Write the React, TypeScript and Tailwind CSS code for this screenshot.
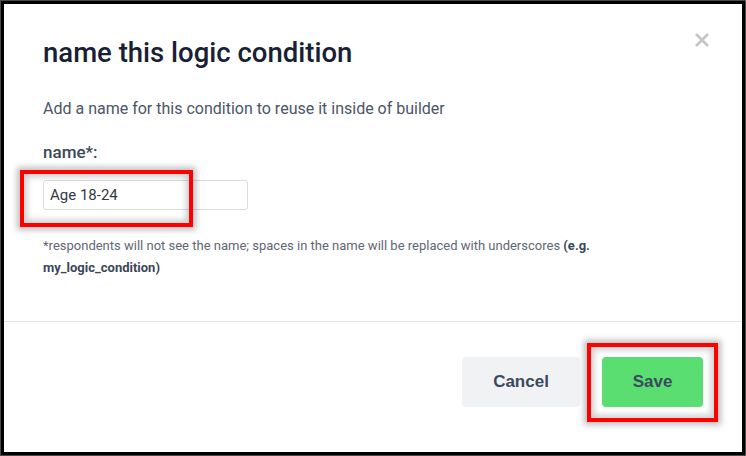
export default function App() {
  return (
    <div className="h-[456px] w-[746px] bg-[#4a4a4a] p-px">
      <div className="relative flex h-full w-full flex-col border-[3px] border-black bg-white font-['Roboto',sans-serif]">
        <button
          type="button"
          className="absolute right-[28px] top-[24px] flex h-6 w-6 items-center justify-center text-[#c4c4c4]"
        >
          <svg width="14" height="14" viewBox="0 0 14 14">
            <path d="M1 1 L13 13 M13 1 L1 13" stroke="currentColor" strokeWidth="2.6" />
          </svg>
        </button>

        <div className="h-[317px] px-[39px] pt-[31px]">
          <h2 className="text-[27.5px] font-medium leading-9 text-[#172034]">
            name this logic condition
          </h2>
          <p className="mt-[28px] text-[16px] leading-5 text-[#4b5567]">
            Add a name for this condition to reuse it inside of builder
          </p>

          <label className="mt-[23px] block text-[17px] font-medium leading-5 text-[#3b4759]">
            name*:
          </label>
          <div className="mt-[18px] w-[205px]">
            <input
              defaultValue="Age 18-24"
              className="h-[30px] w-full rounded-[3px] border border-[#dcdcdc] px-[6px] text-[15px] text-[#333a44] outline-none"
            />
          </div>

          <p className="mt-[25px] w-[660px] text-[13px] leading-[22px] text-[#5f6775]">
            *respondents will not see the name; spaces in the name will be replaced with underscores{" "}
            <span className="font-bold text-[#3b4759]">(e.g.</span>{" "}
            <span className="font-bold text-[#3b4759]">my_logic_condition)</span>
          </p>
        </div>

        <div className="flex flex-1 items-start justify-end gap-[22px] border-t border-[#e6e6e6] pr-[39px] pt-[35px]">
          <button
            type="button"
            className="h-[50px] w-[118px] rounded-[4px] bg-[#f0f2f4] font-['Liberation_Sans',Arial,sans-serif] text-[17px] font-bold text-[#3a4a5c]"
          >
            Cancel
          </button>
          <button
            type="button"
            className="h-[50px] w-[101px] rounded-[4px] bg-[#5ade72] font-['Liberation_Sans',Arial,sans-serif] text-[17px] font-bold text-[#3a4a5c]"
          >
            Save
          </button>
        </div>

        {/* highlight frames */}
        <div className="pointer-events-none absolute left-[16px] top-[166px] h-[57px] w-[173px] border-[4px] border-[#ff0000] shadow-[0_0_6px_3px_rgba(0,0,0,0.25),inset_0_0_6px_3px_rgba(0,0,0,0.2)]" />
        <div className="pointer-events-none absolute left-[583px] top-[339px] h-[79px] w-[131px] border-[4px] border-[#ff0000] shadow-[0_0_6px_3px_rgba(0,0,0,0.25),inset_0_0_6px_3px_rgba(0,0,0,0.2)]" />
      </div>
    </div>
  );
}
